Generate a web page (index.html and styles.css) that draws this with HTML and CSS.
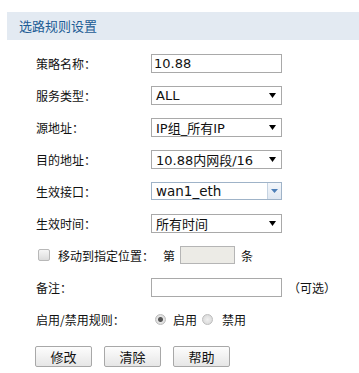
FILE: index.html
```html
<!DOCTYPE html>
<html>
  <head>
    <title>选路规则设置</title>
    <link rel="stylesheet" href="styles.css">
  </head>
  <body>
    <div class="panel-title">选路规则设置</div>
    <form class="rule-form" action="">
      <div class="row">
        <label class="label">策略名称：</label>
        <div class="field text">10.88</div>
      </div>
      <div class="row">
        <label class="label">服务类型：</label>
        <div class="field select">ALL<svg class="arrow" width="7" height="5" viewBox="0 0 7 5"><path d="M0 0H7L3.5 5Z" fill="#000"/></svg></div>
      </div>
      <div class="row">
        <label class="label">源地址：</label>
        <div class="field select">IP组_所有IP<svg class="arrow" width="7" height="5" viewBox="0 0 7 5"><path d="M0 0H7L3.5 5Z" fill="#000"/></svg></div>
      </div>
      <div class="row">
        <label class="label">目的地址：</label>
        <div class="field select">10.88内网段/16<svg class="arrow" width="7" height="5" viewBox="0 0 7 5"><path d="M0 0H7L3.5 5Z" fill="#000"/></svg></div>
      </div>
      <div class="row">
        <label class="label">生效接口：</label>
        <div class="field combo"><span class="combo-text">wan1_eth</span><span class="combo-btn"><svg width="7" height="4" viewBox="0 0 7 4"><path d="M0 0H7L3.5 4Z" fill="#4d7fb8"/></svg></span></div>
      </div>
      <div class="row">
        <label class="label">生效时间：</label>
        <div class="field select">所有时间<svg class="arrow" width="7" height="5" viewBox="0 0 7 5"><path d="M0 0H7L3.5 5Z" fill="#000"/></svg></div>
      </div>
      <div class="row">
        <label class="label check-label"><span class="checkbox"></span>移动到指定位置：</label>
        <div class="inline">第<span class="pos-input"></span>条</div>
      </div>
      <div class="row">
        <label class="label">备注：</label>
        <div class="field text"></div>
        <span class="hint">（可选）</span>
      </div>
      <div class="row">
        <label class="label">启用/禁用规则：</label>
        <div class="inline radios">
          <span class="radio on"></span>启用
          <span class="radio"></span>禁用
        </div>
      </div>
      <div class="buttons">
        <button type="button">修改</button>
        <button type="button">清除</button>
        <button type="button">帮助</button>
      </div>
    </form>
  </body>
</html>
```

FILE: styles.css
```css
body { margin: 0; background: #fff; color: #111; font-family: "Noto Sans CJK SC", "DejaVu Sans", sans-serif; font-size: 12px; }

.panel-title { margin: 12px 0 0 7px; height: 28px; line-height: 28px; padding-left: 12px; background: #e3eaf2; color: #1d5c95; font-size: 13px; }

.rule-form { padding: 7px 0 0 36px; }
.row { display: flex; align-items: center; height: 32px; }
.label { width: 115px; flex: none; white-space: nowrap; }

.field { box-sizing: border-box; width: 131px; height: 19px; border: 1px solid #a9a9a9; background: #fff; display: flex; align-items: center; font-family: "DejaVu Sans", "Noto Sans CJK SC", sans-serif; font-size: 13px; }
.field.text { padding-left: 2px; }
.field.select { padding-left: 4px; }
.field .arrow { margin-left: auto; margin-right: 5px; }
.field.combo { height: 18px; border-color: #9fb3c8; }
.combo-text { padding-left: 4px; font-size: 13.5px; flex: 1; }
.combo-btn { width: 13px; height: 100%; border-left: 1px solid #c5d3e2; background: linear-gradient(#f4f7fb, #dfe7f1); display: flex; align-items: center; justify-content: center; }

.check-label { display: flex; align-items: center; width: 127px; }
.checkbox { box-sizing: border-box; width: 12px; height: 12px; border: 1px solid #b8b8b8; border-radius: 2px; background: linear-gradient(#f6f6f6, #dcdcdc); margin: 0 8px 0 2px; }

.inline { display: flex; align-items: center; }
.pos-input { box-sizing: border-box; width: 55px; height: 18px; border: 1px solid #b5b5b5; background: #ecebe6; margin: 0 6px 0 5px; }
.hint { margin-left: 6px; }

.radios { padding-left: 4px; }
.radio { box-sizing: border-box; width: 11px; height: 11px; border-radius: 50%; border: 1px solid #bdbdbd; background: radial-gradient(#f0f0f0, #d4d4d4); margin-right: 7px; }
.radio.on { background: radial-gradient(#555 0 2px, #e6e6e6 3px, #d0d0d0); }
.radios .radio:nth-of-type(2) { margin-left: 5px; margin-right: 9px; }

.buttons { display: flex; gap: 12px; margin-top: 11px; margin-left: -1px; }
.buttons button { width: 57px; height: 21px; border: 1px solid #a8a8a8; border-radius: 2px; background: linear-gradient(#fdfdfd, #e6e6e6); font-family: "Noto Sans CJK SC", sans-serif; font-size: 13px; color: #111; padding: 0; }
```
